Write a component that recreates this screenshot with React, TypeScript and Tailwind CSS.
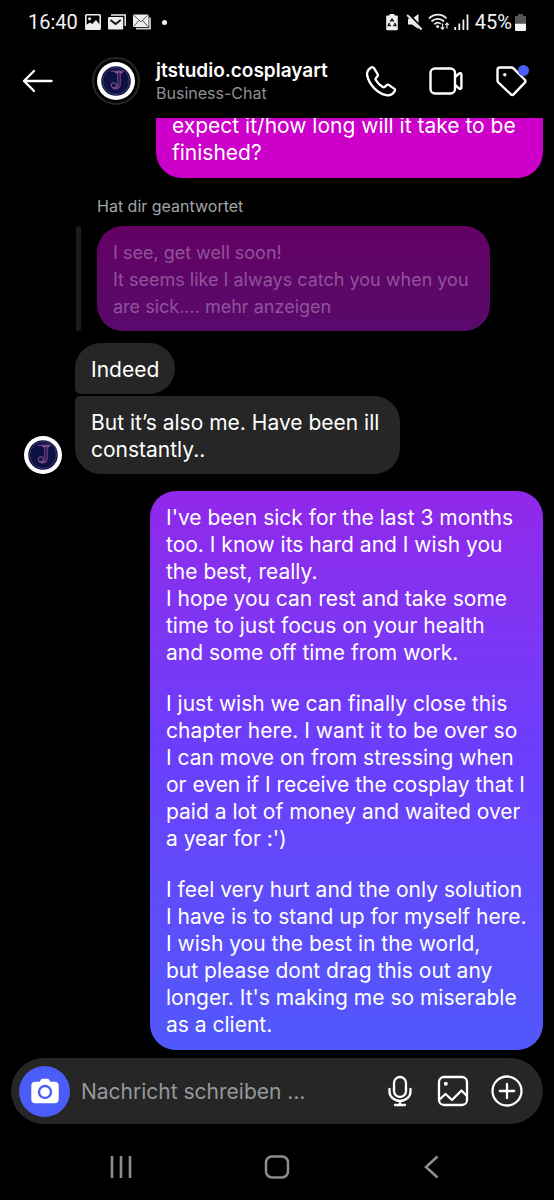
import React from 'react';

const LONG_MESSAGE = [
  "I've been sick for the last 3 months\ntoo. I know its hard and I wish you\nthe best, really.\nI hope you can rest and take some\ntime to just focus on your health\nand some off time from work.",
  "I just wish we can finally close this\nchapter here. I want it to be over so\nI can move on from stressing when\nor even if I receive the cosplay that I\npaid a lot of money and waited over\na year for :')",
  "I feel very hurt and the only solution\nI have is to stand up for myself here.\nI wish you the best in the world,\nbut please dont drag this out any\nlonger. It's making me so miserable\nas a client.",
];

const Logo: React.FC<{ className?: string }> = ({ className }) => (
  <svg viewBox="0 0 38 38" className={className} aria-hidden="true">
    <circle cx="19" cy="19" r="19" fill="#fff" />
    <circle cx="19" cy="19" r="14.8" fill="#0d1142" />
    <circle cx="19" cy="19" r="13.4" fill="none" stroke="#4d4a80" strokeWidth="0.7" />
    <text x="20.5" y="26.5" textAnchor="middle" fontFamily="Liberation Serif, serif" fontSize="26" fill="#191444" stroke="#93569f" strokeWidth="0.8">J</text>
    <path d="M14 9.2h12.500" stroke="#93569f" strokeWidth="0.9" />
    <circle cx="16.8" cy="23.3" r="2.6" fill="#191444" stroke="#93569f" strokeWidth="1" />
  </svg>
);

const StatusBar: React.FC = () => (
  <div className="flex h-11 shrink-0 items-center justify-between pl-7 pr-7 font-['Roboto',sans-serif] text-[20px] leading-6 text-gray-100">
    <div className="flex items-center gap-[7px]">
      <span>16:40</span>
      <svg width="16" height="16" viewBox="0 0 16 16" fill="none" aria-hidden="true">
        <rect x="0.8" y="0.8" width="14.4" height="14.4" rx="0.8" stroke="#eee" strokeWidth="1.6" />
        <circle cx="4.6" cy="4.8" r="1.5" fill="#eee" />
        <path d="M1 11l4-2.5 2.2 1.4L11 6l4 5v4H1z" fill="#eee" />
      </svg>
      <svg width="18" height="16" viewBox="0 0 18 16" aria-hidden="true">
        <path d="M3 1h14.2v11" fill="none" stroke="#eee" strokeWidth="1.5" />
        <rect x="0" y="3" width="15.2" height="12.6" rx="1" fill="#eee" />
        <path d="M2.5 6l5.1 4 5.1-4" fill="none" stroke="#111" strokeWidth="1.8" />
      </svg>
      <svg width="18" height="16" viewBox="0 0 18 16" aria-hidden="true">
        <path d="M17 3.5v11.200H3" fill="none" stroke="#ccc" strokeWidth="1.8" />
        <rect x="0" y="0.5" width="15.6" height="12.6" rx="1" fill="#eee" />
        <path d="M0.8 1.3l7 6.5 7-6.5M0.8 12.3L6 6.5M14.8 12.3L9.6 6.5" fill="none" stroke="#444" strokeWidth="0.9" />
      </svg>
      <span className="ml-1 h-[5px] w-[5px] rounded-full bg-gray-100" />
    </div>
    <div className="flex items-center">
      <svg width="12" height="18" viewBox="0 0 12 18" className="mr-2" aria-hidden="true">
        <path d="M3.5 1h5v1.6H11a.8.8 0 01.8.8V16.5a.8.8 0 01-.8.8H1a.8.8 0 01-.8-.8V3.4a.8.8 0 01.8-.8h2.5z" fill="#eee" />
        <path d="M4.3 8.600L6 6.200l1.700 2.400M8.700 10l1.100 2.500H7.200M4.900 12.500H2.300L3.400 10" fill="none" stroke="#111" strokeWidth="1.5" />
      </svg>
      <svg width="18" height="18" viewBox="0 0 18 18" className="mr-1" aria-hidden="true">
        <path d="M2 5.8h4L12.5 1v15L6 11.5H2z" fill="#eee" />
        <path d="M2.4 1.2l14 15" stroke="#000" strokeWidth="3" />
        <path d="M1.2 2l14.5 14.500" stroke="#eee" strokeWidth="1.8" />
      </svg>
      <svg width="22" height="18" viewBox="0 0 22 18" fill="none" className="mr-1" aria-hidden="true">
        <path d="M1 5.500C6 .4 14 .4 18.500 5.500M3.500 8.500c3.700-3.600 8.900-3.600 12.500 0M6.300 11.300c2-2 4.600-2 6.500-.4" stroke="#eee" strokeWidth="1.8" />
        <circle cx="9.6" cy="13.6" r="1.5" fill="#eee" />
        <path d="M14.500 10.500v5.500M12.700 14.300l1.800 1.900 1.800-1.900M19 15.500V10M17.200 11.900L19 10l1.800 1.900" stroke="#eee" strokeWidth="1.2" />
      </svg>
      <svg width="15" height="16" viewBox="0 0 15 16" className="mr-[6px]" aria-hidden="true">
        <path d="M1.2 16v-3M5.3 16V9.500M9.400 16V5.500M13.500 16V.5" stroke="#eee" strokeWidth="1.8" />
      </svg>
      <span>45%</span>
      <svg width="11" height="17" viewBox="0 0 11 17" className="ml-[3px]" aria-hidden="true">
        <path d="M3 0h5v2h3v7H0V2h3z" fill="#555" />
        <path d="M0 9.500h11V16a1 1 0 01-1 1H1a1 1 0 01-1-1z" fill="#f5f5f5" />
      </svg>
    </div>
  </div>
);

const Header: React.FC = () => (
  <header className="flex h-[74px] shrink-0 items-center pb-px pl-[22px] pr-[27px]">
    <button type="button" aria-label="Zurück">
      <svg width="32" height="24" viewBox="0 0 32 24" fill="none" stroke="#fff" strokeWidth="2.4" strokeLinecap="round" strokeLinejoin="round">
        <path d="M29.500 12H2M12 2L2 12l10 10" />
      </svg>
    </button>
    <div className="ml-[38px] flex h-12 w-12 shrink-0 items-center justify-center rounded-full border-2 border-[#26262a]">
      <Logo className="h-[38px] w-[38px]" />
    </div>
    <div className="ml-4 min-w-0 flex-1">
      <h1 className="text-[19px] font-semibold leading-6 text-white">jtstudio.cosplayart</h1>
      <p className="text-[16px] leading-5 text-[#8e9097]">Business-Chat</p>
    </div>
    <div className="flex items-center gap-8 text-white">
      <button type="button" aria-label="Anrufen">
        <svg width="32" height="32" viewBox="0 0 32 32" fill="none" stroke="currentColor" strokeWidth="2.3" strokeLinejoin="round">
          <path d="M6.200 2.500C3 4.500 1.600 7.400 2.200 10.500 4 19.500 12.500 28.500 21.500 30.200c3.300.6 6.400-1 8.200-4 .6-1 .3-2-.6-2.600l-5-3.500c-.9-.6-1.900-.5-2.700.2l-1.600 1.500c-.6.5-1.300.6-2 .2-3-1.700-5.300-4-7-7-.4-.7-.3-1.400.2-2l1.300-1.500c.7-.8.8-1.800.2-2.700L9 3.100c-.7-1-1.800-1.200-2.800-.6z" />
        </svg>
      </button>
      <button type="button" aria-label="Videochat">
        <svg width="34" height="32" viewBox="0 0 34 32" fill="none" stroke="currentColor" strokeWidth="2.4" strokeLinejoin="round">
          <rect x="1.500" y="3.500" width="24.500" height="25" rx="4.500" />
          <path d="M26 12l4.200-3.500c1-.8 2.200-.3 2.200 1v13c0 1.300-1.200 1.800-2.200 1L26 20" />
        </svg>
      </button>
      <button type="button" aria-label="Label hinzufügen" className="relative">
        <svg width="32" height="32" viewBox="0 0 32 32" fill="none" stroke="currentColor" strokeWidth="2.4" strokeLinejoin="round">
          <path d="M5 2.500h11.200c.9 0 1.700.3 2.300.9L29.600 14.500c1 1 1 2.300 0 3.300L18.800 29.200c-.9.9-2.200.9-3.100 0L3.400 17.500c-.6-.6-.9-1.300-.9-2.100V5c0-1.500 1-2.500 2.500-2.500z" />
          <circle cx="9.800" cy="9.800" r="1.700" fill="currentColor" stroke="none" />
        </svg>
        <span className="absolute -right-0.5 top-0 h-[11px] w-[11px] rounded-full bg-[#4a5df9]" />
      </button>
    </div>
  </header>
);

const Composer: React.FC = () => (
  <form className="mx-[11px] mt-2 flex h-[66px] shrink-0 items-center rounded-full bg-[#262626] pl-2 pr-5 text-white">
    <button type="button" aria-label="Kamera" className="flex h-[51px] w-[51px] shrink-0 items-center justify-center rounded-full bg-[#4a5df9]">
      <svg width="28" height="26" viewBox="0 0 28 26" aria-hidden="true">
        <path d="M9.500 2.200C10 1.200 10.800.7 11.800.7h4.400c1 0 1.800.5 2.300 1.500l.8 1.600H24c2.200 0 3.700 1.500 3.700 3.700v14c0 2.200-1.500 3.700-3.700 3.700H4C1.800 25.200.3 23.700.3 21.500v-14C.3 5.300 1.800 3.800 4 3.800h4.700z" fill="#fff" />
        <circle cx="14" cy="14" r="6" fill="#fff" stroke="#4a5df9" strokeWidth="2.4" />
      </svg>
    </button>
    <input
      type="text"
      aria-label="Nachricht schreiben"
      placeholder="Nachricht schreiben …"
      className="ml-[11px] min-w-0 flex-1 bg-transparent text-[21px] leading-[27px] text-white outline-none placeholder:text-[#96989c]"
    />
    <div className="flex items-center gap-[22px]">
      <button type="button" aria-label="Sprachnachricht">
        <svg width="30" height="32" viewBox="0 0 30 32" fill="none" stroke="currentColor" strokeWidth="2.3" strokeLinecap="round">
          <rect x="9" y="2" width="12" height="20" rx="6" />
          <path d="M4.500 14v2.500a10.500 9.500 0 0021 0V14M15 26v4M10 30h10" />
        </svg>
      </button>
      <button type="button" aria-label="Galerie">
        <svg width="32" height="32" viewBox="0 0 32 32" fill="none" stroke="currentColor" strokeWidth="2.3" strokeLinejoin="round">
          <rect x="2" y="2" width="28" height="28" rx="5" />
          <circle cx="8.800" cy="8.800" r="2" fill="currentColor" stroke="none" />
          <path d="M2.500 24.500l6-5.500 6.500 6 9.500-9.500 5.500 5.500" />
        </svg>
      </button>
      <button type="button" aria-label="Mehr">
        <svg width="32" height="32" viewBox="0 0 32 32" fill="none" stroke="currentColor" strokeWidth="2.3" strokeLinecap="round">
          <circle cx="16" cy="16" r="14.500" />
          <path d="M16 8.800v14.400M8.800 16h14.400" />
        </svg>
      </button>
    </div>
  </form>
);

const NavBar: React.FC = () => (
  <nav className="grid h-[76px] shrink-0 grid-cols-3 items-center justify-items-center px-[43px] pt-[10px] text-[#8d8d8d]">
    <button type="button" aria-label="Letzte Apps">
      <svg width="24" height="24" viewBox="0 0 24 24" stroke="currentColor" strokeWidth="2.6">
        <path d="M3 1v22M12 1v22M21 1v22" />
      </svg>
    </button>
    <button type="button" aria-label="Startseite">
      <svg width="26" height="24" viewBox="0 0 26 24" fill="none" stroke="currentColor" strokeWidth="2.500">
        <rect x="2" y="1.500" width="22" height="21" rx="6" />
      </svg>
    </button>
    <button type="button" aria-label="Zurück">
      <svg width="24" height="24" viewBox="0 0 24 24" fill="none" stroke="currentColor" strokeWidth="2.6">
        <path d="M16.500 1.500L5 12l11.500 10.500" />
      </svg>
    </button>
  </nav>
);

const App: React.FC = () => {
  return (
    <div className="flex h-screen flex-col overflow-hidden bg-black font-['Inter','Liberation_Sans',sans-serif]">
      <StatusBar />
      <Header />

      <main className="flex min-h-0 flex-1 flex-col justify-end overflow-hidden pr-[11px] text-[21px] leading-[27px] text-white">
        <p className="w-[387px] shrink-0 self-end whitespace-pre-line rounded-b-[26px] bg-[#cc00c8] px-4 py-3">
          {'expect it/how long will it take to be\nfinished?'}
        </p>

        {/* Quoted reply */}
        <p className="ml-[97px] mt-[18px] text-[16px] leading-5 text-[#a3a5a9]">Hat dir geantwortet</p>
        <div className="ml-[76px] mt-[10px] flex gap-4">
          <div className="w-[5px] shrink-0 rounded-full bg-[#1c1c1c]" />
          <blockquote className="w-[393px] whitespace-pre-line rounded-[26px] bg-gradient-to-b from-[#640064] to-[#580a6c] px-4 pb-[11px] pt-[13px] text-[18px] text-[#8f5498]">
            {'I see, get well soon!\nIt seems like I always catch you when you\nare sick.... mehr anzeigen'}
          </blockquote>
        </div>

        {/* Incoming messages */}
        <div className="mt-3 flex items-end gap-[13px] pl-6">
          <Logo className="h-[38px] w-[38px] shrink-0" />
          <div className="flex flex-col items-start gap-[2px]">
            <p className="rounded-[26px] rounded-bl-[5px] bg-[#262626] px-4 pb-[11px] pt-[13px]">Indeed</p>
            <p className="w-[325px] whitespace-pre-line rounded-[26px] rounded-tl-[5px] bg-[#262626] px-4 pb-[11px] pt-[13px]">
              {'But it’s also me. Have been ill\nconstantly..'}
            </p>
          </div>
        </div>

        <div className="mt-[17px] flex w-[393px] shrink-0 flex-col gap-6 self-end rounded-[26px] bg-gradient-to-b from-[#9127ea] via-[#6c3dfb] via-45% to-[#5058fb] pb-3 pl-4 pr-3 pt-[13px]">
          {LONG_MESSAGE.map((paragraph) => (
            <p key={paragraph} className="whitespace-pre-line">{paragraph}</p>
          ))}
        </div>
      </main>

      <Composer />
      <NavBar />
    </div>
  );
};

export default App;
